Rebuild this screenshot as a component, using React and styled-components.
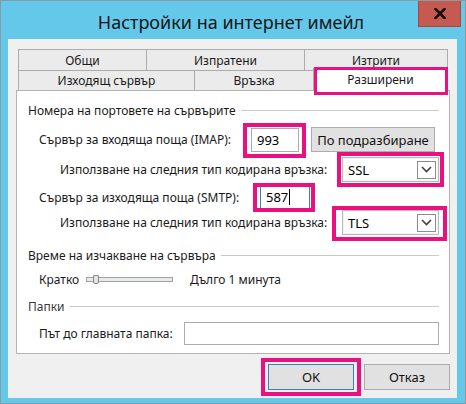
import React from "react";
import styled, { createGlobalStyle } from "styled-components";

const GlobalStyle = createGlobalStyle`
  html, body { margin: 0; padding: 0; background: #fff; }
  body { font-family: "Noto Sans", "Open Sans", sans-serif; }
  * { box-sizing: border-box; }
`;

const FONT = `"Noto Sans", "Open Sans", sans-serif`;
const PINK = "#e8117f";

const Window = styled.div`
  width: 466px;
  height: 404px;
  border: 1px solid #8a9aa3;
  background: #64c8ea;
  display: flex;
  flex-direction: column;
  font-family: ${FONT};
  font-size: 12px;
  color: #1a1a1a;
`;

const TitleBar = styled.div`
  height: 38px;
  flex: none;
  display: grid;
  grid-template-columns: 1fr auto 1fr;
  align-items: start;
  padding-right: 4px;
`;

const Title = styled.div`
  grid-column: 2;
  font-size: 18px;
  line-height: 20px;
  padding-top: 11px;
  color: #151515;
  white-space: nowrap;
`;

const CloseButton = styled.div`
  grid-column: 3;
  justify-self: end;
  width: 43px;
  height: 26px;
  background: #c75a50;
  border: 1px solid #a8463f;
  border-top: none;
  display: flex;
  align-items: center;
  justify-content: center;
`;

const Client = styled.div`
  flex: 1;
  margin: 0 8px 6px 7px;
  background: #f0f0f0;
  padding: 10px 7px 8px 8px;
  display: flex;
  flex-direction: column;
`;

const Tabs = styled.div`
  display: flex;
  flex-direction: column;
  margin: 0 2px 0 2px;
`;

const TabRow = styled.div`
  display: flex;
  height: ${(p) => p.$h}px;
`;

const Tab = styled.div`
  position: relative;
  width: ${(p) => p.$w}px;
  flex: none;
  border-top: 1px solid #acacac;
  border-left: 1px solid #acacac;
  &:last-child { border-right: 1px solid #acacac; }
  background: ${(p) => (p.$active ? "#ffffff" : "#ebebeb")};
  display: flex;
  align-items: center;
  justify-content: center;
  white-space: nowrap;
  ${(p) =>
    p.$active &&
    `
    z-index: 2;
    margin-top: -2px;
    margin-bottom: -1px;
    height: ${p.$h + 3}px;
    padding-bottom: 1px;
    &::after {
      content: "";
      position: absolute;
      top: -2px;
      left: 0;
      right: -1px;
      bottom: -4px;
      border: 3px solid ${PINK};
      pointer-events: none;
    }
  `}
`;

const Panel = styled.div`
  height: 264px;
  background: #fff;
  border: 1px solid #b4b4b4;
  padding: 0 10px 0 11px;
  display: flex;
  flex-direction: column;
`;

const SectionHeader = styled.div`
  margin-top: ${(p) => p.$mt}px;
  height: 16px;
  display: flex;
  align-items: center;
  gap: 5px;
  white-space: nowrap;
  color: ${(p) => p.$color || "#1a1a1a"};
  &::after {
    content: "";
    flex: 1;
    height: 1px;
    background: #c9c9c9;
  }
`;

const Row = styled.div`
  margin-top: ${(p) => p.$mt}px;
  padding-left: ${(p) => p.$indent}px;
  height: ${(p) => p.$h || 24}px;
  display: flex;
  align-items: center;
  white-space: nowrap;
`;

const Label = styled.div`
  width: ${(p) => p.$w}px;
  flex: none;
`;

const Highlight = styled.div`
  position: relative;
  display: flex;
  flex: none;
  &::after {
    content: "";
    position: absolute;
    top: ${(p) => -p.$t}px;
    right: ${(p) => -p.$r}px;
    bottom: ${(p) => -p.$b}px;
    left: ${(p) => -p.$l}px;
    border: 4px solid ${PINK};
    pointer-events: none;
    z-index: 5;
  }
`;

const TextBox = styled.div`
  width: ${(p) => p.$w}px;
  height: ${(p) => p.$h || 24}px;
  flex: none;
  background: #fff;
  border: 1px solid ${(p) => (p.$focused ? "#3c7fb1" : "#acacac")};
  display: flex;
  align-items: center;
  padding-left: 5px;
  font-size: 13px;
  color: #000;
`;

const Caret = styled.span`
  display: inline-block;
  width: 1px;
  height: 16px;
  background: #000;
  margin-left: 1px;
`;

const Button = styled.div`
  width: ${(p) => p.$w}px;
  height: ${(p) => p.$h || 26}px;
  flex: none;
  background: #e1e1e1;
  border: 1px solid ${(p) => (p.$default ? "#3c7fb1" : "#adadad")};
  display: flex;
  align-items: center;
  justify-content: center;
  font-size: 13px;
  color: #111;
  margin-left: ${(p) => p.$ml || 0}px;
`;

const Select = styled.div`
  width: 97px;
  height: 25px;
  background: #fff;
  border: 1px solid #b9b9b9;
  box-shadow: inset 0 0 0 1px #f2f2f2;
  display: flex;
  align-items: center;
  justify-content: space-between;
  padding: 0 2px 0 5px;
  font-size: 13px;
  color: #000;
`;

const Arrow = styled.div`
  width: 19px;
  height: 18px;
  border: 1px solid #8c8c8c;
  background: #fff;
  display: flex;
  align-items: center;
  justify-content: center;
`;

const SliderTrack = styled.div`
  position: relative;
  width: 87px;
  height: 5px;
  margin: 0 17px 0 8px;
  background: #e7eaea;
  border: 1px solid #a3a3a3;
  flex: none;
`;

const SliderThumb = styled.div`
  position: absolute;
  left: 6px;
  top: -3px;
  width: 6px;
  height: 9px;
  background: #e3e3e3;
  border: 1px solid #8a8a8a;
  border-radius: 1px 1px 2px 2px;
`;

const Footer = styled.div`
  margin-top: 10px;
  display: flex;
  justify-content: flex-end;
  gap: 10px;
`;

const Chevron = () => (
  <svg width="11" height="7" viewBox="0 0 11 7">
    <path d="M1 1 L5.5 5.5 L10 1" fill="none" stroke="#404040" strokeWidth="1.6" />
  </svg>
);

const CloseX = () => (
  <svg width="12" height="11" viewBox="0 0 12 11">
    <path d="M1.5 1 L10.5 10 M10.5 1 L1.5 10" stroke="#111" strokeWidth="2.6" strokeLinecap="square" />
  </svg>
);

const row1 = [
  { label: "Общи", w: 128 },
  { label: "Изпратени", w: 158 },
  { label: "Изтрити", w: 144 },
];
const row2 = [
  { label: "Изходящ сървър", w: 176 },
  { label: "Връзка", w: 119 },
  { label: "Разширени", w: 135, active: true },
];

export default function App() {
  return (
    <>
      <GlobalStyle />
      <Window>
        <TitleBar>
          <Title>Настройки на интернет имейл</Title>
          <CloseButton>
            <CloseX />
          </CloseButton>
        </TitleBar>
        <Client>
          <Tabs>
            <TabRow $h={21}>
              {row1.map((t) => (
                <Tab key={t.label} $w={t.w} $h={21}>
                  {t.label}
                </Tab>
              ))}
            </TabRow>
            <TabRow $h={20}>
              {row2.map((t) => (
                <Tab key={t.label} $w={t.w} $h={20} $active={t.active}>
                  {t.label}
                </Tab>
              ))}
            </TabRow>
          </Tabs>
          <Panel>
            <SectionHeader $mt={11}>Номера на портовете на сървърите</SectionHeader>
            <Row $mt={9} $indent={11} $h={25}>
              <Label $w={212}>Сървър за входяща поща (IMAP):</Label>
              <Highlight $t={5} $r={7} $b={6} $l={8}>
                <TextBox $w={48}>993</TextBox>
              </Highlight>
              <Button $w={124} $h={25} $ml={12}>
                По подразбиране
              </Button>
            </Row>
            <Row $mt={5} $indent={32} $h={25}>
              <Label $w={282}>Използване на следния тип кодирана връзка:</Label>
              <Highlight $t={5} $r={5} $b={5} $l={5}>
                <Select>
                  SSL
                  <Arrow>
                    <Chevron />
                  </Arrow>
                </Select>
              </Highlight>
            </Row>
            <Row $mt={3} $indent={11} $h={24}>
              <Label $w={221}>Сървър за изходяща поща (SMTP):</Label>
              <Highlight $t={2} $r={5} $b={3} $l={7}>
                <TextBox $w={50} $focused>
                  587
                  <Caret />
                </TextBox>
              </Highlight>
            </Row>
            <Row $mt={1} $indent={32} $h={25}>
              <Label $w={282}>Използване на следния тип кодирана връзка:</Label>
              <Highlight $t={4} $r={8} $b={6} $l={10}>
                <Select>
                  TLS
                  <Arrow>
                    <Chevron />
                  </Arrow>
                </Select>
              </Highlight>
            </Row>
            <SectionHeader $mt={12}>Време на изчакване на сървъра</SectionHeader>
            <Row $mt={8} $indent={11} $h={16}>
              <Label $w={39}>Кратко</Label>
              <SliderTrack>
                <SliderThumb />
              </SliderTrack>
              <span>Дълго 1 минута</span>
            </Row>
            <SectionHeader $mt={11} $color="#3a3a3a">Папки</SectionHeader>
            <Row $mt={8} $indent={11} $h={23}>
              <Label $w={145}>Път до главната папка:</Label>
              <TextBox $w={255} $h={23} />
            </Row>
          </Panel>
          <Footer>
            <Highlight $t={6} $r={7} $b={6} $l={7}>
              <Button $w={86} $default>
                OK
              </Button>
            </Highlight>
            <Button $w={86}>Отказ</Button>
          </Footer>
        </Client>
      </Window>
    </>
  );
}
